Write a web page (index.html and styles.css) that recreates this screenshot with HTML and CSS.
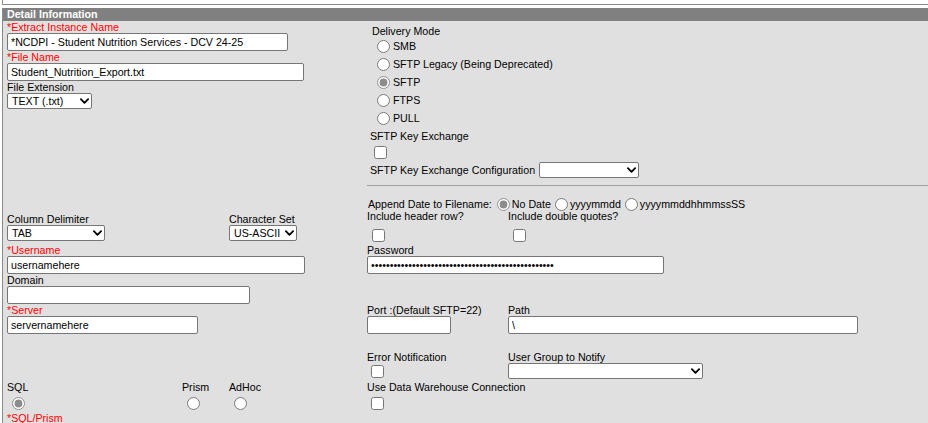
FILE: index.html
```html
<!DOCTYPE html>
<html>
<head>
<meta charset="utf-8">
<link rel="stylesheet" href="styles.css">
</head>
<body>
<div class="top-box"></div>
<div class="panel">
  <div class="panel-header">Detail Information</div>
  <div class="panel-body">
    <div class="col-left">
      <div class="lbl req">*Extract Instance Name</div>
      <input class="txt w-instance" type="text" value="*NCDPI - Student Nutrition Services - DCV 24-25">
      <div class="lbl req">*File Name</div>
      <input class="txt w-file" type="text" value="Student_Nutrition_Export.txt">
      <div class="lbl">File Extension</div>
      <span class="sel-wrap w-ext"><select class="sel"><option>TEXT (.txt)</option></select><svg class="chev" viewBox="0 0 10 6"><path d="M1 1l4 4 4-4"/></svg></span>

      <div class="pair-row mt-delim">
        <div class="grp w-222">
          <div class="lbl">Column Delimiter</div>
          <span class="sel-wrap w-delim"><select class="sel"><option>TAB</option></select><svg class="chev" viewBox="0 0 10 6"><path d="M1 1l4 4 4-4"/></svg></span>
        </div>
        <div class="grp">
          <div class="lbl">Character Set</div>
          <span class="sel-wrap w-charset"><select class="sel"><option>US-ASCII</option></select><svg class="chev" viewBox="0 0 10 6"><path d="M1 1l4 4 4-4"/></svg></span>
        </div>
      </div>

      <div class="lbl req mt-3">*Username</div>
      <input class="txt w-user" type="text" value="usernamehere">
      <div class="lbl">Domain</div>
      <input class="txt w-domain" type="text" value="">
      <div class="lbl req">*Server</div>
      <input class="txt w-server" type="text" value="servernamehere">

      <div class="pair-row mt-sql">
        <div class="grp w-175">
          <div class="lbl">SQL</div>
          <input class="rad rad-block" type="radio" name="src" checked>
        </div>
        <div class="grp w-47">
          <div class="lbl">Prism</div>
          <input class="rad rad-block" type="radio" name="src">
        </div>
        <div class="grp">
          <div class="lbl">AdHoc</div>
          <input class="rad rad-block" type="radio" name="src">
        </div>
      </div>
      <div class="lbl req mt-2">*SQL/Prism</div>
    </div>

    <div class="col-right">
      <div class="delivery">
        <div class="lbl">Delivery Mode</div>
        <label class="radio-row"><input class="rad" type="radio" name="mode">SMB</label>
        <label class="radio-row"><input class="rad" type="radio" name="mode">SFTP Legacy (Being Deprecated)</label>
        <label class="radio-row"><input class="rad" type="radio" name="mode" checked>SFTP</label>
        <label class="radio-row"><input class="rad" type="radio" name="mode">FTPS</label>
        <label class="radio-row"><input class="rad" type="radio" name="mode">PULL</label>
      </div>
      <div class="sftp">
        <div class="lbl">SFTP Key Exchange</div>
        <input class="chk chk-sftp" type="checkbox">
        <div class="config-row">
          <span>SFTP Key Exchange Configuration</span>
          <span class="sel-wrap w-config"><select class="sel"><option></option></select><svg class="chev" viewBox="0 0 10 6"><path d="M1 1l4 4 4-4"/></svg></span>
        </div>
      </div>
      <div class="divider"></div>
      <div class="append-row">
        <span class="append-lbl">Append Date to Filename:</span>
        <input class="rad rad-inline" type="radio" name="dt" checked><span>No Date</span>
        <input class="rad rad-inline" type="radio" name="dt"><span>yyyymmdd</span>
        <input class="rad rad-inline" type="radio" name="dt"><span>yyyymmddhhmmssSS</span>
      </div>
      <div class="pair-row">
        <div class="grp w-141">
          <div class="lbl">Include header row?</div>
          <input class="chk chk-incl" type="checkbox">
        </div>
        <div class="grp">
          <div class="lbl">Include double quotes?</div>
          <input class="chk chk-incl" type="checkbox">
        </div>
      </div>
      <div class="lbl mt-2">Password</div>
      <input class="txt w-pass" type="password" value="1111111111111111111111111111111111111111111111111">
      <div class="pair-row mt-port">
        <div class="grp w-141">
          <div class="lbl">Port :(Default SFTP=22)</div>
          <input class="txt w-port" type="text" value="">
        </div>
        <div class="grp">
          <div class="lbl">Path</div>
          <input class="txt w-path" type="text" value="\">
        </div>
      </div>
      <div class="pair-row mt-err">
        <div class="grp w-141">
          <div class="lbl">Error Notification</div>
          <input class="chk chk-err" type="checkbox">
        </div>
        <div class="grp">
          <div class="lbl">User Group to Notify</div>
          <span class="sel-wrap w-group"><select class="sel"><option></option></select><svg class="chev" viewBox="0 0 10 6"><path d="M1 1l4 4 4-4"/></svg></span>
        </div>
      </div>
      <div class="lbl mt-2">Use Data Warehouse Connection</div>
      <input class="chk chk-dwh" type="checkbox">
    </div>
  </div>
</div>
</body>
</html>
```

FILE: styles.css
```css
html, body {
  margin: 0;
  padding: 0;
  background: #ffffff;
  overflow: hidden;
}
body {
  font-family: "Liberation Sans", Arial, sans-serif;
  font-size: 10.67px;
  color: #000;
  width: 928px;
  height: 423px;
}
.top-box {
  margin-left: 2px;
  height: 4px;
  border-left: 1px solid #8a8a8a;
  border-bottom: 1px solid #8a8a8a;
  background: #fff;
}
.panel {
  margin-top: 3px;
  margin-left: 2px;
  border-left: 1px solid #8a8a8a;
  background: #e0e0e0;
  height: 420px;
}
.panel-header {
  height: 13px;
  line-height: 13px;
  background: #808080;
  color: #ffffff;
  font-weight: bold;
  padding-left: 4px;
}
.panel-body {
  display: flex;
  padding-left: 4px;
}
.col-left {
  width: 360px;
  flex: none;
}
.col-right {
  flex: 1;
}
.lbl {
  height: 12px;
  line-height: 12px;
  white-space: nowrap;
}
.req { color: #ff0000; }

.txt {
  display: block;
  box-sizing: border-box;
  height: 18px;
  margin: 0;
  padding: 0 3px;
  border: 1px solid #767676;
  border-radius: 2px;
  background: #fff;
  font-family: "Liberation Sans", Arial, sans-serif;
  font-size: 10.67px;
  color: #000;
}
.sel-wrap {
  position: relative;
  display: block;
  height: 16px;
  flex: none;
}
.sel {
  -webkit-appearance: none;
  appearance: none;
  display: block;
  box-sizing: border-box;
  width: 100%;
  height: 16px;
  margin: 0;
  padding: 0 14px 0 4px;
  border: 1px solid #767676;
  border-radius: 2px;
  background-color: #fff;
  font-family: "Liberation Sans", Arial, sans-serif;
  font-size: 10.67px;
  line-height: 14px;
  color: #000;
  outline: none;
}
.chev {
  position: absolute;
  right: 3px;
  top: 5px;
  width: 9px;
  height: 6px;
  pointer-events: none;
}
.chev path {
  fill: none;
  stroke: #000;
  stroke-width: 2;
  stroke-linecap: round;
  stroke-linejoin: round;
}
.rad, .chk {
  width: 13px;
  height: 13px;
  margin: 0;
  accent-color: #8c8c8c;
}
.rad-block { display: block; margin: 4px 0 0 5px; }

.w-instance { width: 281px; }
.w-file { width: 297px; }
.w-ext { width: 85px; }
.w-delim { width: 98px; }
.w-charset { width: 68px; }
.w-user { width: 298px; }
.w-domain { width: 243px; }
.w-server { width: 191px; }
.w-pass { width: 297px; }
.w-port { width: 84px; }
.w-path { width: 350px; }
.w-config { width: 100px; }
.w-group { width: 195px; }

.pair-row { display: flex; }
.grp { flex: none; }
.w-222 { width: 222px; }
.w-175 { width: 175px; }
.w-47 { width: 47px; }
.w-141 { width: 141px; }

.mt-delim { margin-top: 104px; }
.mt-3 { margin-top: 3px; }
.mt-2 { margin-top: 2px; }
.mt-sql { margin-top: 47px; }
.mt-port { margin-top: 30px; }
.mt-err { margin-top: 17px; }

.delivery {
  margin-top: 4px;
  padding-left: 5px;
}
.radio-row {
  display: flex;
  align-items: center;
  height: 18px;
  white-space: nowrap;
}
.radio-row .rad { margin: 0 3px 0 5px; }

.sftp {
  margin-top: 3px;
  padding-left: 3px;
}
.chk-sftp { display: block; margin: 4px 0 0 4px; }
.config-row {
  display: flex;
  align-items: center;
  gap: 4px;
  height: 16px;
  margin-top: 3px;
  white-space: nowrap;
}
.divider {
  margin-top: 7px;
  height: 1px;
  background: #a0a0a0;
}
.append-row {
  display: flex;
  align-items: center;
  height: 12px;
  margin-top: 12px;
  white-space: nowrap;
}
.append-lbl { padding-left: 1px; margin-right: 1px; }
.rad-inline { margin: 0 2px 0 4px; }
.chk-incl { display: block; margin: 7px 0 0 5px; }
.chk-err { display: block; margin: 2px 0 0 4px; }
.chk-dwh { display: block; margin: 4px 0 0 4px; }
```
